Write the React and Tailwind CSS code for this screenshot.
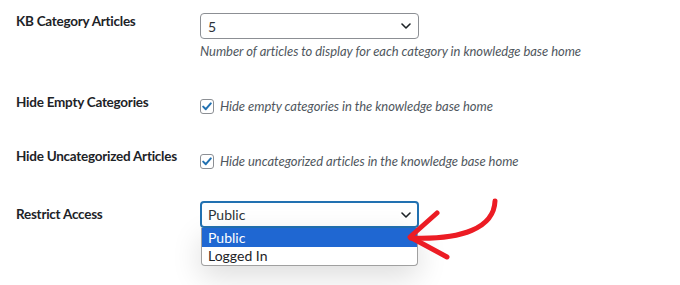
import React from 'react';

const font = { fontFamily: 'Lato, "Open Sans", sans-serif' };

function Chevron() {
  return (
    <svg width="10" height="6" viewBox="0 0 10 6" fill="none" className="shrink-0">
      <path d="M1 1l4 4 4-4" stroke="#1d2327" strokeWidth="1.6" strokeLinecap="round" strokeLinejoin="round" />
    </svg>
  );
}

function Checkbox() {
  return (
    <span className="flex h-[15px] w-[14px] shrink-0 items-center justify-center rounded-[3px] border border-[#8c8f94] bg-white">
      <svg width="10" height="9" viewBox="0 0 10 9" fill="none">
        <path d="M1.2 4.6l2.6 2.6L8.8 1.4" stroke="#2271b1" strokeWidth="2" strokeLinecap="round" strokeLinejoin="round" />
      </svg>
    </span>
  );
}

function Label({ children, className = '' }) {
  return (
    <div className={`w-[184px] shrink-0 text-[13.5px] leading-5 font-bold tracking-[-0.25px] text-[#1d2327] ${className}`}>
      {children}
    </div>
  );
}

export default function App() {
  return (
    <div className="relative h-[285px] w-[680px] overflow-hidden bg-white pl-4" style={font}>
      {/* KB Category Articles */}
      <div className="flex pt-[10px]">
        <Label className="pt-[1px]">KB Category Articles</Label>
        <div className="pt-[3px]">
          <div className="flex h-[26px] w-[219px] items-center justify-between rounded-[4px] border border-[#8c8f94] bg-white pl-[7px] pr-[7px] text-[14px] text-[#2c3338]">
            <span>5</span>
            <Chevron />
          </div>
          <p className="mt-[2px] text-[13px] italic leading-5 tracking-[-0.05px] text-[#50575e]">
            Number of articles to display for each category in knowledge base home
          </p>
        </div>
      </div>

      {/* Hide Empty Categories */}
      <div className="mt-[31px] flex">
        <Label>Hide Empty Categories</Label>
        <label className="mt-[5px] flex items-center gap-[6px] text-[13px] italic tracking-[-0.05px] text-[#50575e]">
          <Checkbox />
          <span>Hide empty categories in the knowledge base home</span>
        </label>
      </div>

      {/* Hide Uncategorized Articles */}
      <div className="mt-[29px] flex">
        <Label>Hide Uncategorized Articles</Label>
        <label className="mt-[6px] flex items-center gap-[6px] text-[13px] italic tracking-[-0.05px] text-[#50575e]">
          <Checkbox />
          <span>Hide uncategorized articles in the knowledge base home</span>
        </label>
      </div>

      {/* Restrict Access */}
      <div className="mt-[30px] flex">
        <Label className="pt-[3px]">Restrict Access</Label>
        <div className="relative">
          <div className="flex h-[27px] w-[219px] items-center justify-between rounded-[4px] border-2 border-[#2271b1] bg-white pl-[6px] pr-[6px] text-[14px] text-[#2c3338]">
            <span>Public</span>
            <Chevron />
          </div>
          <ul className="ml-[1px] w-[217px] overflow-hidden rounded-b-[4px] border border-t-0 border-[#a0a0a0] bg-white text-[14px] text-[#1d2327] shadow-[0_10px_30px_rgba(0,0,0,0.14)]">
            <li className="h-[19px] bg-[#1f67d2] pl-[6px] leading-[19px] text-white">Public</li>
            <li className="h-[18px] pl-[6px] leading-[18px]">Logged In</li>
          </ul>
        </div>
      </div>

      {/* annotation arrow */}
      <svg className="pointer-events-none absolute left-0 top-0" width="680" height="285" viewBox="0 0 680 285" fill="none">
        <path d="M495 201 C494 228 462 240 411 238" stroke="#ec1c24" strokeWidth="5" strokeLinecap="round" />
        <path d="M437 213 L410 237 L447 257" stroke="#ec1c24" strokeWidth="5" strokeLinecap="round" strokeLinejoin="round" />
      </svg>
    </div>
  );
}
